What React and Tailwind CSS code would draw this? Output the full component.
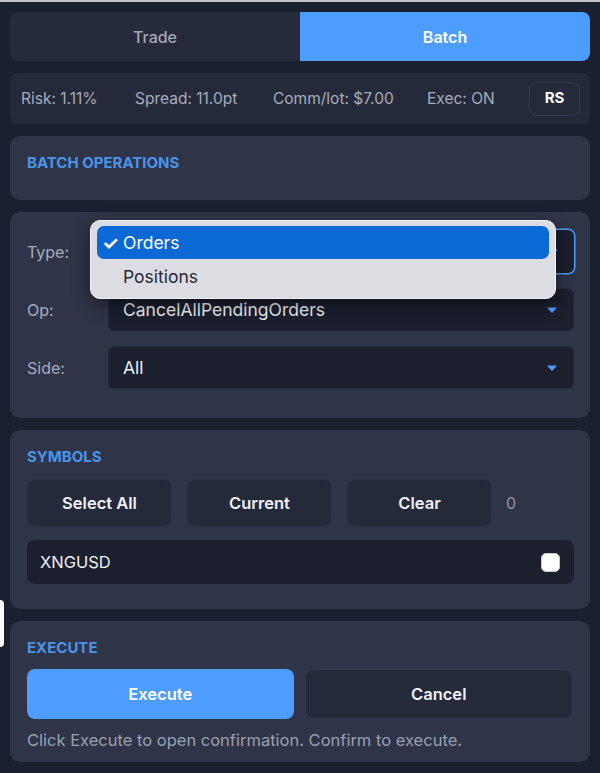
import { useState } from 'react';

const Caret = () => (
  <svg width="12" height="8" viewBox="0 0 12 8" className="shrink-0">
    <path d="M1 1.5h10L6 7z" fill="#4c9dfd" />
  </svg>
);

function SelectBox({ value, focused, hidden }) {
  return (
    <div
      className={
        'flex-1 h-[43px] flex items-center justify-between pl-[14px] pr-[15px] rounded-[6px] bg-[#1b1f2e] text-[17.5px] text-[#eef0f5] ' +
        (focused ? 'ring-[1.5px] ring-[#4c9dfd]' : 'border border-[#252a3b]')
      }
    >
      <span className={'pt-[2px] ' + (hidden ? 'invisible' : '')}>{value}</span>
      <Caret />
    </div>
  );
}

function Row({ label, value, focused, hidden }) {
  return (
    <div className="flex items-center">
      <span className="w-[81px] shrink-0 text-[16px] text-[#a6acbb]">{label}</span>
      <SelectBox value={value} focused={focused} hidden={hidden} />
    </div>
  );
}

function Title({ children }) {
  return <h3 className="text-[15px] font-bold text-[#4a95ea] uppercase leading-5">{children}</h3>;
}

export default function App() {
  const [tab, setTab] = useState('batch');

  return (
    <div className="relative w-[600px] h-[773px] bg-[#1b2030] border-t-2 border-[#c4c5c9] font-['Inter','Liberation_Sans',sans-serif] overflow-hidden">
      <div className="absolute left-0 top-[598px] w-[4px] h-[47px] rounded-r-[4px] bg-white" />

      <div className="flex flex-col gap-3 px-[10px] pt-[10px]">
        {/* tabs */}
        <div className="flex h-[49px] rounded-[8px] overflow-hidden bg-[#262b3c]">
          <button onClick={() => setTab('trade')}
            className={'flex-1 text-[16px] font-medium ' + (tab === 'trade' ? 'bg-[#4c9dfd] text-white' : 'text-[#a3a9b8]')}>
            Trade
          </button>
          <button onClick={() => setTab('batch')}
            className={'flex-1 text-[16px] font-semibold ' + (tab === 'batch' ? 'bg-[#4c9dfd] text-white' : 'text-[#a3a9b8]')}>
            Batch
          </button>
        </div>

        {/* stats */}
        <div className="flex items-center h-[51px] rounded-[8px] bg-[#252a3a] pl-[11px] pr-[10px] text-[15.5px] text-[#a6acbb] whitespace-nowrap">
          <span className="w-[114px]">Risk: 1.11%</span>
          <span className="w-[138px]">Spread: 11.0pt</span>
          <span className="w-[154px]">Comm/lot: $7.00</span>
          <span>Exec: ON</span>
          <button className="ml-auto w-[51px] h-[34px] rounded-[8px] border border-[#343a50] text-[15px] font-bold text-white">RS</button>
        </div>

        {/* batch operations */}
        <div className="h-[64px] rounded-[10px] bg-[#2f3448] px-[17px] pt-[17px]">
          <Title>Batch operations</Title>
        </div>

        {/* form */}
        <div className="relative h-[206px] rounded-[10px] bg-[#2f3448] pl-[17px] pr-[16px] pt-[18px] flex flex-col gap-[15px]">
          <Row label="Type:" value="Orders" focused hidden />
          <Row label="Op:" value="CancelAllPendingOrders" />
          <Row label="Side:" value="All" />

          {/* open select menu */}
          <div className="absolute left-[80px] top-[8px] w-[466px] h-[79px] rounded-[10px] bg-[#dcdde3] border border-[#f2f2f4] shadow-[0_6px_18px_rgba(0,0,0,0.45)] px-[6px] pt-[5px]">
            <div className="h-[33px] rounded-[7px] bg-[#0b69d6] flex items-center pl-[5px] pt-[2px] text-[17.5px] text-white">
              <span className="w-[21px] text-[19px] font-bold leading-none">✓</span>
              <span>Orders</span>
            </div>
            <div className="h-[34px] flex items-center pl-[26px] pt-[2px] text-[17.5px] text-[#272a33]">Positions</div>
          </div>
        </div>

        {/* symbols */}
        <div className="h-[179px] rounded-[10px] bg-[#2f3448] px-[17px] pt-[17px]">
          <Title>Symbols</Title>
          <div className="flex items-center gap-[15px] mt-[12px]">
            {['Select All', 'Current', 'Clear'].map((t) => (
              <button key={t}
                className="w-[145px] h-[48px] rounded-[8px] bg-[#252a3b] border border-[#2b3146] text-[16.5px] font-semibold text-[#eef0f5]">
                {t}
              </button>
            ))}
            <span className="ml-[-1px] text-[16px] text-[#8f96a8]">0</span>
          </div>
          <div className="mt-[13px] h-[44px] mr-[-1px] rounded-[8px] bg-[#1b1f2e] flex items-center justify-between pl-[13px] pr-[14px]">
            <span className="text-[16.5px] text-[#eef0f5]">XNGUSD</span>
            <span className="w-[19px] h-[19px] rounded-[5px] bg-white border border-[#c8c9cc]" />
          </div>
        </div>

        {/* execute */}
        <div className="h-[141px] rounded-[10px] bg-[#2f3448] px-[17px] pt-[17px]">
          <Title>Execute</Title>
          <div className="flex gap-[11px] mt-[11px]">
            <button className="flex-1 h-[50px] rounded-[8px] bg-[#4c9dfd] text-[16.5px] font-semibold text-white">Execute</button>
            <button className="flex-1 h-[50px] rounded-[8px] bg-[#252a3b] border border-[#343a50] text-[16.5px] font-semibold text-[#eef0f5]">Cancel</button>
          </div>
          <p className="mt-[9px] text-[16.5px] leading-6 text-[#99a0b1]">Click Execute to open confirmation. Confirm to execute.</p>
        </div>
      </div>
    </div>
  );
}
